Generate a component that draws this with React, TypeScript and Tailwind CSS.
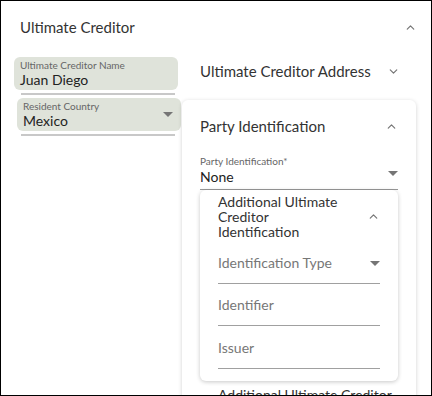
import { ChevronDown, ChevronUp } from 'lucide-react'

const font = { fontFamily: 'Lato, "Open Sans", sans-serif' }

function Caret() {
  return (
    <svg width="10" height="5" viewBox="0 0 10 5" className="shrink-0">
      <path d="M0 0 L10 0 L5 5 Z" fill="#757575" />
    </svg>
  )
}

function Up() {
  return <ChevronUp size={13} strokeWidth={2.2} className="shrink-0 text-[#757575]" />
}

function FilledField({ label, value, select, offset }: { label: string; value: string; select?: boolean; offset: string }) {
  return (
    <div className="flex flex-col">
      <div className={`${offset} flex h-[33px] w-[164px] items-center rounded-md bg-[#dfe3da] pl-[6px] pr-[8px]`}>
        <div className="flex flex-1 flex-col">
          <span className="text-[10px] leading-[11px] text-[#666]">{label}</span>
          <span className="text-[14px] leading-[17px] text-[#222]">{value}</span>
        </div>
        {select && <Caret />}
      </div>
      <div className="ml-[20px] mt-[3px] h-[2px] w-[154px] bg-[#c8c8c8]" />
    </div>
  )
}

function LineField({ label, select, gap }: { label: string; select?: boolean; gap: string }) {
  return (
    <div className={`${gap} flex flex-col border-b border-[#a0a0a0] pb-[11px]`}>
      <div className="flex items-center justify-between">
        <span className="text-[14px] leading-[18px] text-[#777]">{label}</span>
        {select && <Caret />}
      </div>
    </div>
  )
}

export default function App() {
  return (
    <div style={font} className="h-[396px] w-[432px] overflow-hidden border border-black bg-white">
      <div className="flex h-[53px] items-center justify-between pl-[19px] pr-[14px]">
        <span className="text-[15px] text-[#333]">Ultimate Creditor</span>
        <Up />
      </div>

      <div className="flex">
        <div className="flex w-[181px] flex-col gap-[3px] pt-[3px]">
          <FilledField label="Ultimate Creditor Name" value="Juan Diego" offset="ml-[13px]" />
          <FilledField label="Resident Country" value="Mexico" select offset="ml-[16px]" />
        </div>

        <div className="flex w-[234px] flex-col">
          <div className="flex h-[46px] items-start justify-between pl-[18px] pr-[16px] pt-[8px]">
            <span className="text-[15px] leading-[18px] text-[#333]">Ultimate Creditor Address</span>
            <ChevronDown size={13} strokeWidth={2.2} className="mt-[3px] text-[#757575]" />
          </div>

          <div className="flex flex-col rounded-md bg-white pb-4 pl-[18px] pr-[18px] pt-[17px] shadow-[0_1px_4px_rgba(0,0,0,0.18)]">
            <div className="flex items-center justify-between">
              <span className="text-[15px] leading-[18px] text-[#333]">Party Identification</span>
              <Up />
            </div>

            <div className="mt-[20px] flex items-end justify-between border-b border-[#999] pb-[3px]">
              <div className="flex flex-col">
                <span className="text-[10px] leading-[12px] text-[#666]">Party Identification*</span>
                <span className="mt-[1px] text-[14px] leading-[18px] text-[#222]">None</span>
              </div>
              <div className="mb-[10px]">
                <Caret />
              </div>
            </div>

            <div className="flex flex-col rounded-md bg-white pb-[12px] pl-[18px] pr-[18px] pt-[4px] shadow-[0_1px_4px_rgba(0,0,0,0.22)]">
              <div className="flex items-center justify-between">
                <span className="w-[128px] text-[14px] leading-[15px] text-[#333]">
                  Additional Ultimate Creditor Identification
                </span>
                <Up />
              </div>
              <LineField label="Identification Type" select gap="mt-[15px]" />
              <LineField label="Identifier" gap="mt-[12px]" />
              <LineField label="Issuer" gap="mt-[13px]" />
            </div>

            <span className="mt-[6px] pl-[18px] text-[14px] leading-[15px] text-[#333]">
              Additional Ultimate Creditor Identification
            </span>
          </div>
        </div>
      </div>
    </div>
  )
}
